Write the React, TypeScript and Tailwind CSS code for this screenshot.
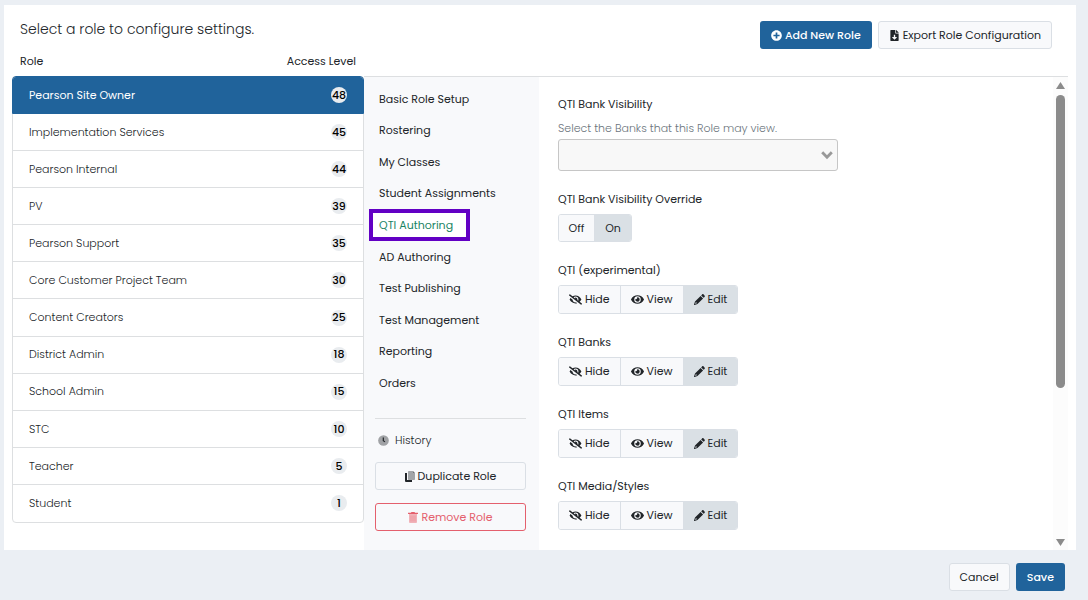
import { useState } from "react";
import { clsx } from "clsx";
import {
  FaEye,
  FaEyeSlash,
  FaFileDownload,
  FaPlusCircle,
} from "react-icons/fa";

const roles = [
  { name: "Pearson Site Owner", level: 48 },
  { name: "Implementation Services", level: 45 },
  { name: "Pearson Internal", level: 44 },
  { name: "PV", level: 39 },
  { name: "Pearson Support", level: 35 },
  { name: "Core Customer Project Team", level: 30 },
  { name: "Content Creators", level: 25 },
  { name: "District Admin", level: 18 },
  { name: "School Admin", level: 15 },
  { name: "STC", level: 10 },
  { name: "Teacher", level: 5 },
  { name: "Student", level: 1 },
];

const sections = [
  "Basic Role Setup",
  "Rostering",
  "My Classes",
  "Student Assignments",
  "QTI Authoring",
  "AD Authoring",
  "Test Publishing",
  "Test Management",
  "Reporting",
  "Orders",
];

const permissions = [
  "QTI (experimental)",
  "QTI Banks",
  "QTI Items",
  "QTI Media/Styles",
];

const PencilIcon = () => (
  <svg viewBox="0 0 12 12" className="size-[11px]" fill="#212529">
    <path d="M8.8.5c.5-.5 1.2-.5 1.7 0l1 1c.5.5.5 1.2 0 1.7l-1 1-2.7-2.7z" />
    <path d="M7.2 2.1l2.7 2.7-6.1 6.1-3.2 1.1c-.4.1-.7-.2-.6-.6l1.1-3.2zM1.9 9.1l-.6 1.7 1.7-.6-.1-1-1-.1z" fillRule="evenodd" />
  </svg>
);

const accessOptions = [
  { name: "Hide", icon: <FaEyeSlash className="size-[13px]" /> },
  { name: "View", icon: <FaEye className="size-[13px]" /> },
  { name: "Edit", icon: <PencilIcon /> },
];

const ClockIcon = () => (
  <svg viewBox="0 0 12 12" className="size-[11px]">
    <circle cx="6" cy="6" r="5.8" fill="#a0a2a5" />
    <path d="M5.8 2.8v3.4l1.8 1.3" fill="none" stroke="#212529" strokeWidth="1.3" />
  </svg>
);

const DuplicateIcon = () => (
  <svg viewBox="0 0 10 11" className="h-[11px] w-[10px]">
    <path d="M0 2h2v7h5v2H1a1 1 0 0 1-1-1z" fill="#212529" />
    <path d="M3 .8c0-.5.3-.8.8-.8H8v2h2v6.2c0 .5-.3.8-.8.8H3.8c-.5 0-.8-.3-.8-.8z" fill="#a2a5a8" />
    <path d="M8 0l2 2H8z" fill="#6f7275" />
  </svg>
);

const TrashIcon = () => (
  <svg viewBox="0 0 10 11" className="h-[11px] w-[10px]">
    <path d="M1 2h8v8a1 1 0 0 1-1 1H2a1 1 0 0 1-1-1z" fill="#f1b3b9" />
    <path d="M0 .7h3L3.4 0h3.2l.4.7h3V2H0z" fill="#e4606d" />
    <path d="M3 3.5v6M5 3.5v6M7 3.5v6" stroke="#ea8e97" strokeWidth=".7" />
  </svg>
);

const RolesPage = () => {
  const [role, setRole] = useState("Pearson Site Owner");
  const [section, setSection] = useState("QTI Authoring");
  const [override, setOverride] = useState("On");
  const [access, setAccess] = useState<Record<string, string>>({});

  return (
    <div className="min-h-screen bg-[#ebeff4] pt-[5px] pr-3 pl-1 font-['Poppins','Inter',sans-serif] text-[11px] text-[#212529]">
      <main className="flex bg-white pr-2 pl-2">
        <section className="w-[352px] shrink-0">
          <h1 className="px-2 pt-3 text-sm leading-6 font-light whitespace-nowrap">
            Select a role to configure settings.
          </h1>
          <div className="flex h-[35px] items-center justify-between px-2 pt-[6px]">
            <span>Role</span>
            <span>Access Level</span>
          </div>
          <ul className="grid min-h-[447px] auto-rows-fr rounded border border-[#dddfe1]">
            {roles.map((item) => (
              <li
                key={item.name}
                className="border-b border-[#dddfe1] last:border-b-0"
              >
                <button
                  onClick={() => setRole(item.name)}
                  className={clsx(
                    "flex h-full w-full items-center justify-between px-4 text-left",
                    role === item.name
                      ? "rounded-t-[3px] bg-[#20639b] text-white outline outline-[#20639b]"
                      : "font-light"
                  )}
                >
                  {item.name}
                  <span className="flex size-4 items-center justify-center rounded-full bg-[#e9ecef] font-medium text-black">
                    {item.level}
                  </span>
                </button>
              </li>
            ))}
          </ul>
        </section>

        <div className="flex min-w-0 grow flex-col">
          <div className="flex h-[71px] items-start justify-end gap-[6px] pt-4 pr-4">
            <button className="flex h-7 items-center gap-[3px] rounded-[3px] bg-[#20639b] px-[11px] font-medium text-white">
              <FaPlusCircle className="size-[11px]" />
              Add New Role
            </button>
            <button className="flex h-7 items-center gap-[3px] rounded-[3px] border border-[#dadfe5] bg-[#f8f9fb] px-[10px]">
              <FaFileDownload className="size-[11px]" />
              Export Role Configuration
            </button>
          </div>

          <div className="flex h-[474px] border-t border-[#dddfe1]">
            <aside className="w-[175px] shrink-0 bg-[#f8f9fb]">
              <nav className="mt-[6px] grid h-[316px] auto-rows-fr justify-items-start pl-[5px]">
                {sections.map((item) => (
                  <button
                    key={item}
                    onClick={() => setSection(item)}
                    className={clsx(
                      "h-full whitespace-nowrap",
                      section === item
                        ? "border-4 border-[#6200c4] bg-white pr-[13px] pl-[6px] text-[#198464]"
                        : "px-[10px]"
                    )}
                  >
                    {item}
                  </button>
                ))}
              </nav>
              <div className="mr-[13px] ml-[11px] mt-[19px] flex flex-col border-t border-[#dddfe1] pt-[11px]">
                <button className="flex h-5 items-center gap-[6px] pl-[3px] font-light">
                  <ClockIcon />
                  History
                </button>
                <button className="mt-3 flex h-7 items-center justify-center gap-[3px] rounded-[3px] border border-[#dadfe5]">
                  <DuplicateIcon />
                  Duplicate Role
                </button>
                <button className="mt-[13px] flex h-7 items-center justify-center gap-[3px] rounded-[3px] border border-[#e4606d] text-[#e4606d]">
                  <TrashIcon />
                  Remove Role
                </button>
              </div>
            </aside>

            <section className="min-w-0 grow overflow-hidden pt-[17px] pl-[19px]">
              <label htmlFor="banks" className="block leading-5">
                QTI Bank Visibility
              </label>
              <p className="mt-1 leading-5 font-light text-[#6c757d]">
                Select the Banks that this Role may view.
              </p>
              <div className="relative mt-px w-[280px]">
                <select
                  id="banks"
                  className="block h-8 w-full appearance-none rounded-[3px] border border-[#c6c6c6] bg-[#f8f8f8]"
                />
                <svg viewBox="0 0 12 9" className="pointer-events-none absolute top-3 right-[5px] h-[9px] w-3">
                  <path d="M1.2 1.2L6 6.2l4.8-5" fill="none" stroke="#999" strokeWidth="2.8" />
                </svg>
              </div>

              <fieldset className="mt-[18px]">
                <legend className="leading-5">QTI Bank Visibility Override</legend>
                <div className="mt-[5px] inline-flex h-7 divide-x divide-[#dadfe5] overflow-hidden rounded-[3px] border border-[#dadfe5] align-top">
                  {["Off", "On"].map((option) => (
                    <button
                      key={option}
                      onClick={() => setOverride(option)}
                      className={clsx(
                        "w-9",
                        override === option ? "bg-[#dae0e5]" : "bg-[#f8f9fb]"
                      )}
                    >
                      {option}
                    </button>
                  ))}
                </div>
              </fieldset>

              {permissions.map((permission) => (
                <fieldset key={permission} className="mt-[18px]">
                  <legend className="leading-5">{permission}</legend>
                  <div className="mt-[5px] inline-flex h-[29px] divide-x divide-[#dadfe5] overflow-hidden rounded-[3px] border border-[#dadfe5] align-top">
                    {accessOptions.map((option) => (
                      <button
                        key={option.name}
                        onClick={() =>
                          setAccess({ ...access, [permission]: option.name })
                        }
                        className={clsx(
                          "flex items-center gap-[3px] px-[10px]",
                          (access[permission] ?? "Edit") === option.name
                            ? "bg-[#dae0e5]"
                            : "bg-[#f8f9fb]"
                        )}
                      >
                        {option.icon}
                        {option.name}
                      </button>
                    ))}
                  </div>
                </fieldset>
              ))}
            </section>

            {/* scroll bar */}
            <div className="flex w-[15px] shrink-0 flex-col items-center bg-[#fcfcfc] pt-[5px] pb-1">
              <svg viewBox="0 0 9 7" className="h-[7px] w-[9px]">
                <path d="M4.5 0L9 7H0z" fill="#8b8b8b" />
              </svg>
              <div className="mt-[6px] h-[293px] w-[9px] rounded-full bg-[#8b8b8b]" />
              <svg viewBox="0 0 9 7" className="mt-auto h-[7px] w-[9px]">
                <path d="M4.5 7L9 0H0z" fill="#8b8b8b" />
              </svg>
            </div>
          </div>
        </div>
      </main>

      <footer className="flex justify-end gap-[6px] pt-[13px] pr-[11px]">
        <button className="h-7 rounded-[3px] border border-[#dadfe5] bg-[#f8f9fb] px-[10px]">
          Cancel
        </button>
        <button className="h-7 rounded-[3px] bg-[#20639b] px-[11px] font-medium text-white">
          Save
        </button>
      </footer>
    </div>
  );
};

export default RolesPage;
